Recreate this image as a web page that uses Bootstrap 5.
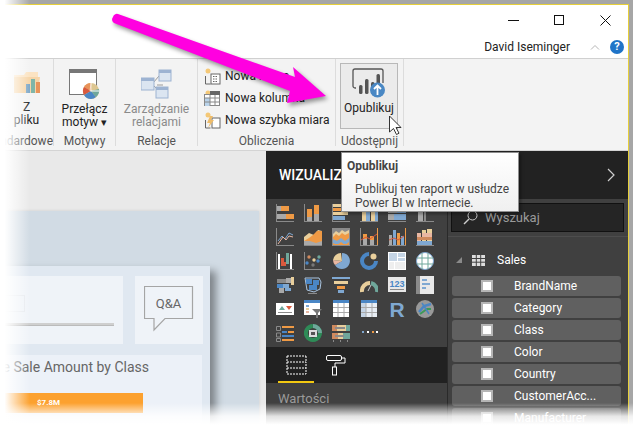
<!DOCTYPE html>
<html lang="pl">
<head>
    <meta charset="UTF-8">
    <meta name="viewport" content="width=device-width, initial-scale=1.0">
    <title>Opublikuj</title>
    <!-- Bootstrap CSS -->
    <link href="https://cdn.jsdelivr.net/npm/bootstrap@5.3.1/dist/css/bootstrap.min.css" rel="stylesheet">
    <style>
        body { margin: 0; background: #fff; font-family: Roboto, "Noto Sans", sans-serif; font-size: 12px; color: #222; }
        svg { display: block; }
        .ekran { width: 633px; height: 427px; overflow: hidden; position: relative; background: #a6a6a6; padding: 4px 4px 0 0; }
        .okno { height: 100%; border-top: 1px solid #e6cf3a; border-right: 1px solid #e6cf3a; background: #fff; }

        /* pasek tytulu */
        .pasek { height: 54px; flex: none; border-bottom: 1px solid #d0d0d0; }
        .okno-ster { height: 31px; padding-top: 5px; }
        .okno-btn { width: 46px; height: 20px; }
        .uzytkownik { height: 22px; padding-right: 4px; font-size: 12px; }
        .uzytkownik span { margin-right: 20px; }
        .pomoc { width: 14px; height: 14px; background: #1f74c8; color: #fff; border-radius: 50%; font-weight: 700; font-size: 11px; line-height: 14px; text-align: center; margin-left: 10px; }

        /* wstazka */
        .wstazka { height: 92px; flex: none; background: #f3f3f3; border-bottom: 1px solid #d4d4d4; }
        .grupa { padding-top: 2px; }
        .grupa-tresc { height: 72px; }
        .grupa-linia { border-right: 1px solid #dcdcdc; height: 87px; }
        .etykieta { height: 16px; line-height: 16px; text-align: center; color: #555; white-space: nowrap; overflow: hidden; }
        .g1 { width: 54px; }
        .g2 { width: 62px; }
        .g3 { width: 82px; }
        .g4 { width: 138px; }
        .g5 { width: 68px; }
        .btn-wst { text-align: center; line-height: 13px; padding-top: 8px; }
        .btn-wst svg { margin: 0 auto 2px; }
        .szary { color: #8a8a8a; }
        .wiersz-wst { height: 22px; padding-left: 6px; white-space: nowrap; font-size: 12px; gap: 4px; }
        .publikuj { margin: 2px 5px 0 4px; height: 66px; border: 1px solid #b8b8b8; background: #ebebeb; padding-top: 4px; text-align: center; line-height: 13px; }
        .publikuj svg { margin: 0 auto 4px; }

        /* kanwa */
        .dol { min-height: 0; }
        .kanwa { width: 266px; flex: none; background: #e9e9e9; padding: 60px 7px 0 0; }
        .strona { height: 100%; background: #d1dbe4; padding: 55px 49px 0 0; box-shadow: 0 0 3px rgba(0,0,0,.12); }
        .arkusz { height: 100%; background: #e0e8f1; padding-top: 10px; box-shadow: 6px 5px 8px rgba(0,0,0,.4); }
        .kafel { height: 68px; background: #eff3f8; }
        .kafel-a { width: 123px; padding: 19px 9px 0 0; }
        .pole { width: 25px; height: 17px; border: 1px solid #e6e9ee; }
        .suwak { height: 3px; margin-top: 11px; background: #cfcfcf; border-bottom: 1px solid #bbb; }
        .kafel-b { width: 68px; margin-left: 12px; padding: 10px 0 0 9px; }
        .wykres { width: 202px; height: 100px; margin-top: 11px; background: #ecf1f8; }
        .wykres-tytul { width: 149px; height: 27px; line-height: 25px; font-size: 14px; color: #666; white-space: nowrap; justify-content: flex-end; }
        .slupek { width: 143px; height: 20px; margin-top: 11px; background: #fca12f; color: #fff; font-size: 8px; font-weight: 700; line-height: 20px; padding-left: 37px; }

        /* panele */
        .panele { background: #404040; min-width: 0; }
        .panel-nag { height: 48px; flex: none; background: #222; color: #fff; padding: 0 13px 0 13px; font-size: 14px; font-weight: 500; white-space: nowrap; }
        .wiz { width: 182px; flex: none; border-right: 1px solid #2a2a2a; }
        .galeria { display: grid; grid-template-columns: repeat(6, 18px); grid-auto-rows: 18px; column-gap: 10px; row-gap: 6px; padding: 5px 0 0 10px; height: 148px; }
        .zakladki { height: 36px; background: #212121; padding-left: 12px; }
        .zakladka { width: 36px; height: 36px; padding: 8px 0 0 8px; }
        .zakladka-on { border-bottom: 2px solid #f2c811; }
        .wartosci { color: #9a9a9a; font-size: 13px; padding: 6px 0 0 12px; }
        .szukaj { margin: 4px 4px 0 3px; height: 29px; background: #252525; border: 1px solid #111; color: #9a9a9a; font-size: 13px; padding-left: 11px; gap: 7px; }
        .separator { height: 5px; border-bottom: 1px solid #4d4d4d; }
        .sales { height: 32px; padding-left: 8px; color: #fff; font-size: 12px; margin-top: 7px; }
        .trojkat { width: 0; height: 0; border-left: 6px solid transparent; border-bottom: 6px solid #8a8a8a; margin-right: 10px; }
        .pole-lista { padding: 0 7px 0 4px; }
        .pole-wiersz { height: 20px; margin-bottom: 2px; background: #606060; border-radius: 3px; color: #fff; font-size: 12px; padding-left: 29px; white-space: nowrap; }
        .kwadrat { width: 12px; height: 12px; background: #fff; border: 2px solid #b5b5b5; margin-right: 21px; flex: none; }

        /* nakladki */
        .strzalka { position: absolute; left: 0; top: 0; pointer-events: none; filter: drop-shadow(2px 3px 2px rgba(0,0,0,.4)); }
        .dymek { position: absolute; left: 341px; top: 152px; width: 178px; height: 60px; background: linear-gradient(#fff, #f0f0f0); border: 1px solid #8e8e8e; box-shadow: 2px 2px 3px rgba(0,0,0,.35); padding: 6px 5px; color: #444; line-height: 14px; }
        .dymek-tekst { padding: 9px 0 0 8px; }
        .kursor { position: absolute; left: 388px; top: 115px; }
        .zanik-lewy { position: absolute; left: 0; top: 0; bottom: 0; width: 30px; background: linear-gradient(90deg, #fff 15%, rgba(255,255,255,0)); }
        .zanik-dol { position: absolute; left: 0; right: 0; bottom: 0; height: 24px; background: linear-gradient(rgba(255,255,255,0), rgba(255,255,255,.85) 55%, #fff 90%); }
    </style>
</head>
<body>
<div class="ekran">
    <div class="okno d-flex flex-column">
        <!-- Pasek tytulu -->
        <div class="pasek">
            <div class="okno-ster d-flex justify-content-end">
                <div class="okno-btn d-flex align-items-center justify-content-center"><svg width="11" height="11"><path d="M0 5.5h11" stroke="#111"/></svg></div>
                <div class="okno-btn d-flex align-items-center justify-content-center"><svg width="11" height="11"><rect x=".5" y=".5" width="9" height="9" fill="none" stroke="#111"/></svg></div>
                <div class="okno-btn d-flex align-items-center justify-content-center"><svg width="11" height="11"><path d="M.5.5l10 10M10.5.5l-10 10" stroke="#111"/></svg></div>
            </div>
            <div class="uzytkownik d-flex justify-content-end align-items-center">
                <span>David Iseminger</span>
                <svg width="10" height="6"><path d="M1 5.5l4-4 4 4" fill="none" stroke="#b5b5b5"/></svg>
                <div class="pomoc">?</div>
            </div>
        </div>

        <!-- Wstazka -->
        <div class="wstazka d-flex">
            <div class="grupa g1 grupa-linia">
                <div class="grupa-tresc btn-wst overflow-hidden">
                    <svg width="30" height="26"><path d="M2 6h10l2-3h12v6H8L2 22z" fill="#fbe3c2"/><path d="M2 8h26l-2 16H2z" fill="#f6d5a8"/><rect x="14" y="15" width="4" height="9" fill="#7fa8c8"/><rect x="19" y="10" width="4" height="14" fill="#7fb5a8"/><rect x="24" y="13" width="4" height="11" fill="#e8935a"/></svg>
                    <div class="pt-1">Z<br>pliku</div>
                </div>
                <div class="etykieta d-flex justify-content-end">Niestandardowe</div>
            </div>
            <div class="grupa g2 grupa-linia">
                <div class="grupa-tresc btn-wst">
                    <svg width="32" height="32"><rect x=".5" y=".5" width="27" height="25" fill="#fff" stroke="#777"/><rect width="28" height="4" fill="#777"/><circle cx="22" cy="22" r="8" fill="#ddc690"/><path d="M22 22V14a8 8 0 0 0-7 4z" fill="#e8935a"/><path d="M22 22l-7-4a8 8 0 0 0 0 8z" fill="#d9593d"/><path d="M22 22l-7 4a8 8 0 0 0 7 4 8 8 0 0 0 5-2z" fill="#4a86c5"/><path d="M22 22l5 6a8 8 0 0 0 3-8z" fill="#6fa79b"/><path d="M22 22V14l-1 8h9z" fill="none" stroke="#fff" stroke-width=".6"/></svg>
                    <div>Przełącz<br>motyw <small>▾</small></div>
                </div>
                <div class="etykieta">Motywy</div>
            </div>
            <div class="grupa g3 grupa-linia">
                <div class="grupa-tresc btn-wst szary">
                    <svg width="32" height="32"><path d="M16 16h6M12 14l6-7M12 16l6 6" stroke="#9a9a9a"/><rect y="9" width="13" height="12" fill="#dbe5f1" stroke="#9db3d2"/><rect y="9" width="13" height="3" fill="#9db3d2"/><rect x="18" y="1" width="12" height="11" fill="#dbe5f1" stroke="#9db3d2"/><rect x="18" y="1" width="12" height="3" fill="#9db3d2"/><rect x="15" y="18" width="12" height="11" fill="#dbe5f1" stroke="#9db3d2"/><rect x="15" y="18" width="12" height="3" fill="#9db3d2"/></svg>
                    <div>Zarządzanie<br>relacjami</div>
                </div>
                <div class="etykieta">Relacje</div>
            </div>
            <div class="grupa g4 grupa-linia">
                <div class="grupa-tresc pt-1">
                    <div class="wiersz-wst d-flex align-items-center">
                        <svg width="17" height="17"><circle cx="4" cy="3" r="2.5" fill="#f4c877"/><path d="M1.500 8v8h5" fill="none" stroke="#666"/><rect x="7" y="6" width="9" height="10" fill="#fff" stroke="#666"/><path d="M9 8.500h5M9 11h5M9 13.500h5" stroke="#666" stroke-dasharray="1.500 1"/></svg>
                        <span>Nowa miara</span>
                    </div>
                    <div class="wiersz-wst d-flex align-items-center">
                        <svg width="17" height="17"><circle cx="4" cy="3" r="2.500" fill="#f4c877"/><rect x=".5" y="4.500" width="15" height="11" fill="#fff" stroke="#888"/><rect x="6" y="1" width="10" height="4" fill="#666"/><rect x="1" y="8" width="5" height="8" fill="#b9d3ea"/><path d="M6 5v11M11 5v11M1 8h15M1 12h15" stroke="#888"/></svg>
                        <span>Nowa kolumna</span>
                    </div>
                    <div class="wiersz-wst d-flex align-items-center">
                        <svg width="17" height="17"><circle cx="4" cy="3" r="2.500" fill="#f4c877"/><path d="M1.500 8v8h5" fill="none" stroke="#666"/><rect x="8" y="6" width="8" height="10" fill="#fff" stroke="#666"/><path d="M6 4l-3 7h3l-2 5 6-8H7l2-4z" fill="#eebc6a"/></svg>
                        <span>Nowa szybka miara</span>
                    </div>
                </div>
                <div class="etykieta">Obliczenia</div>
            </div>
            <div class="grupa g5 grupa-linia">
                <div class="publikuj">
                    <svg width="34" height="30"><path d="M4 20H3a2 2 0 0 1-2-2V3a2 2 0 0 1 2-2h26a2 2 0 0 1 2 2v12" fill="none" stroke="#555" stroke-width="1.300"/><rect x="7" y="17" width="3.500" height="9" rx="1.500" fill="#555"/><rect x="13" y="11" width="3.500" height="15" rx="1.500" fill="#555"/><rect x="19" y="14" width="3.500" height="12" rx="1.500" fill="#555"/><rect x="24.500" y="6" width="3.500" height="14" rx="1.500" fill="#555"/><circle cx="25.500" cy="22" r="7.500" fill="#4a88c4"/><path d="M25.500 27v-9M22 21l3.500-3.500 3.500 3.500" fill="none" stroke="#fff" stroke-width="1.800"/></svg>
                    Opublikuj
                </div>
                <div class="etykieta mt-1">Udostępnij</div>
            </div>
        </div>

        <!-- Kanwa i panele -->
        <div class="dol flex-grow-1 d-flex">
            <div class="kanwa">
                <div class="strona">
                    <div class="arkusz">
                        <div class="d-flex">
                            <div class="kafel kafel-a">
                                <div class="pole"></div>
                                <div class="suwak"></div>
                            </div>
                            <div class="kafel kafel-b">
                                <svg width="50" height="46"><path d="M.5.5h48v32H21L10 44V32.500H.5z" fill="none" stroke="#a5a5a5" stroke-width="1.200"/><text x="24.500" y="22" font-size="13" fill="#666" text-anchor="middle">Q&amp;A</text></svg>
                            </div>
                        </div>
                        <div class="wykres">
                            <div class="wykres-tytul d-flex">Average Sale Amount by Class</div>
                            <div class="slupek">$7.8M</div>
                        </div>
                    </div>
                </div>
            </div>
            <div class="panele flex-grow-1 d-flex flex-column">
                <div class="panel-nag d-flex align-items-center justify-content-between">
                    <span>WIZUALIZACJE</span>
                    <svg width="8" height="14"><path d="M1 1l6 6-6 6" fill="none" stroke="#cfcfcf" stroke-width="1.200"/></svg>
                </div>
                <div class="flex-grow-1 d-flex">
                    <div class="wiz">
                        <div class="galeria" id="galeria"></div>
                        <div class="zakladki d-flex">
                            <div class="zakladka zakladka-on">
                                <svg width="21" height="20"><path d="M1 1h19M1 7h19v6H1zM1 13v6h19v-6M1 1v6M20 1v6" fill="none" stroke="#fff" stroke-dasharray="2 1"/></svg>
                            </div>
                            <div class="zakladka ms-1">
                                <svg width="20" height="21"><rect x=".5" y=".5" width="15" height="5" rx="1.500" fill="none" stroke="#fff"/><path d="M16 3h3v5H9v4" fill="none" stroke="#fff"/><rect x="6.500" y="12" width="4" height="8" fill="none" stroke="#fff"/></svg>
                            </div>
                        </div>
                        <div class="wartosci">Wartości</div>
                    </div>
                    <div class="flex-grow-1">
                        <div class="szukaj d-flex align-items-center">
                            <svg width="15" height="15"><circle cx="9.500" cy="5.500" r="4.500" fill="none" stroke="#ccc"/><path d="M6 9l-5 5" stroke="#ccc" stroke-width="1.400"/></svg>
                            <span>Wyszukaj</span>
                        </div>
                        <div class="separator"></div>
                        <div class="sales d-flex align-items-center">
                            <div class="trojkat"></div>
                            <svg width="13" height="11"><rect width="13" height="11" fill="#ddd"/><path d="M0 3.500h13M0 7.200h13M4.300 0v11M8.700 0v11" stroke="#404040"/></svg>
                            <span class="ms-2 ps-1">Sales</span>
                        </div>
                        <div class="pole-lista" id="pola"></div>
                    </div>
                </div>
            </div>
        </div>
    </div>

    <!-- Nakladki -->
    <div class="zanik-lewy"></div>
    <div class="zanik-dol"></div>
    <svg class="strzalka" width="633" height="427"><path d="M113 17a4 4 0 0 1 5-3L295 77l-2-10 33 29-39 7 3-12L114 23a4 4 0 0 1-1-6z" fill="#ff00e0"/></svg>
    <div class="dymek">
        <div class="fw-bold">Opublikuj</div>
        <div class="dymek-tekst">Publikuj ten raport w usłudze<br>Power BI w Internecie.</div>
    </div>
    <svg class="kursor" width="15" height="21"><path d="M1.500 1v16l4-3.500 3 6 2.500-1.300-3-5.700h5z" fill="#fff" stroke="#333"/></svg>
</div>

<!-- Bootstrap JS -->
<script src="https://cdn.jsdelivr.net/npm/bootstrap@5.3.1/dist/js/bootstrap.bundle.min.js"></script>
<script>
    // kolory ikon
    const O = '#ef9a45', G = '#a9a9a9', B = '#7fa8d2', T = '#e9cf9c', P = '#e9b7a2', Z = '#6fa79b', S = '#8a8a8a', W = '#fff', D = '#404040';
    const r = (x, y, w, h, c) => `<rect x="${x}" y="${y}" width="${w}" height="${h}" fill="${c}"/>`;
    const p = (d, c) => `<path d="${d}" fill="${c}"/>`;
    const l = (d, c, w = 1) => `<path d="${d}" fill="none" stroke="${c}" stroke-width="${w}"/>`;
    const osie = r(0, 0, 1, 18, S) + r(0, 17, 18, 1, S);
    const dol = r(0, 17, 18, 1, S);

    const ikony = [
        // rzad 1
        osie + r(1, 2, 4, 5, G) + r(5, 2, 8, 5, O) + r(1, 10, 9, 5, G) + r(10, 10, 8, 5, O),
        osie + r(3, 5, 5, 8, O) + r(3, 13, 5, 4, G) + r(10, 1, 5, 9, O) + r(10, 10, 5, 7, G),
        osie + r(1, 0, 8, 3, T) + r(1, 4, 11, 3, O) + r(1, 8, 15, 3, T) + r(1, 12, 12, 4, B),
        dol + r(2, 1, 4, 16, T) + r(6, 4, 4, 13, B) + r(11, 3, 4, 14, T) + r(15, 6, 3, 11, B),
        dol + r(0, 2, 9, 7, G) + r(9, 2, 9, 7, B) + r(0, 10, 6, 6, G) + r(6, 10, 12, 6, B),
        dol + r(2, 2, 5, 15, G) + r(11, 2, 5, 6, '#d8d8d8') + r(11, 8, 5, 9, D) + r(8, 6, 2, 11, S),
        // rzad 2
        osie + l('M2 13l4-5 3 3 4-6 4 2', B) + l('M2 16l5-7 3 3 3-4 4 1', P),
        dol + p('M0 9l5-4 5 2 4-5 4 1v14H0z', T) + p('M0 13l5-3 4-3 4-4 5 0v14H0z', O) + p('M0 13l6 0 6 2 6-2v4H0z', G),
        r(0, 0, 18, 18, S) + p('M1 6l3-3 3 2 3-3 3 2 4-2v15H1z', T) + p('M1 9l3-3 3 2 3-3 3 2 4-2v12H1z', O) + p('M1 11l4 2 4-3 4 3 4-3v4l-4 3-4-3-4 3-4-2z', B) + r(1, 16, 16, 1, O),
        r(0, 0, 1, 18, S) + r(17, 0, 1, 18, O) + dol + r(3, 6, 4, 11, O) + r(3, 11, 4, 6, G) + r(10, 8, 4, 9, O) + r(10, 12, 4, 5, G) + l('M1 12l5-3 4 2 7-5', '#d9593d'),
        r(17, 0, 1, 18, O) + dol + r(1, 7, 3, 10, G) + r(5, 2, 3, 15, B) + r(9, 5, 3, 12, O) + r(13, 8, 3, 9, B) + l('M1 12l5-2 4 2 6-4', '#d9593d'),
        dol + r(1, 5, 4, 12, P) + r(6, 2, 4, 15, T) + r(11, 1, 5, 16, T) + r(1, 9, 15, 3, '#d08a5e') + r(1, 13, 15, 4, B) + r(6, 5, 10, 4, P),
        // rzad 3
        osie + r(2, 2, 2, 15, W) + r(5, 6, 3, 8, '#d9593d') + r(8, 10, 2, 4, '#d9593d') + r(10, 1, 3, 11, Z) + r(14, 2, 2, 15, W),
        osie + '<circle cx="5" cy="5" r="1.700" fill="#d08a5e"/><circle cx="10" cy="8" r="1.700" fill="#e9cf9c"/><circle cx="3" cy="11" r="1.700" fill="#4a86c5"/><circle cx="14" cy="9" r="1.700" fill="#4a86c5"/><circle cx="9" cy="13" r="1.700" fill="#777"/><circle cx="15" cy="5" r="1.700" fill="#6fa79b"/>',
        p('M10 9V1a8 8 0 1 1-7 12z', B) + p('M10 9L3 13a8 8 0 0 1-2-5z', P) + p('M10 9L1 8a8 8 0 0 1 8-7z', T),
        l('M9 2a7 7 0 1 0 7 7', '#4a86c5', 4) + '<circle cx="13.500" cy="4.500" r="3" fill="#e9cf9c"/>',
        r(0, 0, 18, 18, W) + r(1, 1, 8, 8, '#c5d5e6') + r(10, 1, 7, 4, '#c5d5e6') + r(10, 6, 7, 3, '#c5d5e6') + r(1, 10, 5, 7, '#eee') + r(7, 10, 10, 7, '#eee'),
        '<circle cx="9" cy="9" r="8.500" fill="#fff" stroke="#7fa8d2"/>' + l('M1 6h16M1 12h16M6 1v16M12 1v16', Z),
        // rzad 4
        r(1, 3, 9, 4, S) + r(1, 8, 6, 4, '#4a86c5') + r(7, 8, 6, 4, B) + r(10, 2, 5, 5, G) + r(15, 1, 3, 8, T) + r(3, 12, 5, 5, G) + r(9, 12, 6, 3, B),
        l('M1 2h14l2 4-1 7-6 3-7-2z', '#a9c4e0') + r(2, 3, 6, 5, '#4a86c5') + r(9, 4, 6, 5, '#4a86c5') + r(5, 9, 8, 5, '#4a86c5') + r(4, 17, 9, 1, S),
        r(0, 1, 18, 2, B) + r(2, 5, 14, 3, T) + r(5, 10, 8, 3, O) + r(6, 14, 6, 3, B),
        l('M2 16a8 8 0 0 1 8-9', T, 4) + l('M11 7a8 8 0 0 1 6 9', Z, 4) + l('M8 15l3-6', '#ccc'),
        r(0, 1, 18, 15, '#e8e8e8') + `<text x="9" y="11" font-size="9" font-weight="700" text-anchor="middle" fill="#4a86c5" font-family="Liberation Sans, sans-serif">123</text>` + r(2, 13, 14, 1, S),
        r(0, 0, 18, 18, '#e8e8e8') + r(0, 0, 4, 18, S) + r(6, 3, 5, 2, B) + r(6, 7, 8, 2, B) + r(6, 11, 4, 2, B),
        // rzad 5
        r(0, 3, 18, 12, W) + p('M3 10l3-4 3 4z', Z) + p('M10 6h6l-3 4z', '#d9593d') + r(2, 12, 14, 1, S),
        r(0, 0, 16, 15, W) + r(0, 0, 16, 3, '#4a86c5') + r(2, 5, 3, 2, B) + r(2, 8, 3, 2, T) + r(2, 11, 3, 2, P) + p('M8 9h10l-4 4v5h-2v-5z', '#777'),
        r(1, 0, 16, 17, W) + r(1, 0, 16, 3, '#4a86c5') + l('M6 3v14M12 3v14M1 7.500h16M1 12.500h16', '#aaa'),
        r(1, 0, 16, 17, '#e8eef5') + r(1, 0, 16, 3, '#4a86c5') + r(1, 3, 5, 14, '#c5d5e6') + l('M6 3v14M12 3v14M1 7.500h16M1 12.500h16', '#aaa'),
        `<text x="9" y="17" font-size="21" font-weight="700" text-anchor="middle" fill="#7fa8d2" font-family="Liberation Sans, sans-serif">R</text>`,
        '<circle cx="9" cy="9" r="9" fill="#999"/>' + l('M3 12l5-6 7-2', '#4a86c5', 2.500) + l('M4 14l7-5 4 0', '#3d9a5a', 2) + l('M6 3l7 11', '#4a86c5', 1.500),
        // rzad 6
        l('M.5 2.500h4v4h-4zM.5 9h4v4h-4z', S) + l('M.5 14.500h4v3h-4z', S) + r(6, 2, 12, 2, O) + r(6, 7, 5, 2, '#4a86c5') + r(12, 7, 6, 2, O) + r(6, 11, 12, 2, '#4a86c5') + r(6, 15, 12, 2, O),
        l('M9 2a7 7 0 1 1-.1 0', '#2e8b57', 4) + l('M9 2a7 7 0 0 1 7 7', Z, 4) + r(5, 6, 8, 7, '#ddd') + r(7, 8, 4, 3, '#555'),
        r(0, 1, 5, 6, '#d08a5e') + r(5, 1, 9, 6, T) + r(14, 1, 4, 6, Z) + r(3, 3, 10, 2, S) + r(0, 9, 6, 6, '#d08a5e') + r(6, 9, 5, 6, T) + r(11, 9, 7, 6, Z) + r(3, 11, 9, 2, S) + r(1, 16, 1, 2, S) + r(8, 16, 1, 2, S) + r(15, 16, 1, 2, S),
        r(2, 7, 2, 2, B) + r(7, 7, 2, 2, W) + r(12, 7, 2, 2, O) + r(16, 7, 2, 2, W)
    ];

    // Galeria wizualizacji
    document.getElementById('galeria').innerHTML = ikony.map(i => `<svg width="18" height="18" viewBox="0 0 18 18">${i}</svg>`).join('');

    // Lista pol
    const pola = ['BrandName', 'Category', 'Class', 'Color', 'Country', 'CustomerAcc...', 'Manufacturer'];
    document.getElementById('pola').innerHTML = pola.map(nazwa => `
        <div class="pole-wiersz d-flex align-items-center">
            <div class="kwadrat"></div><span>${nazwa}</span>
        </div>`).join('');
</script>
</body>
</html>
